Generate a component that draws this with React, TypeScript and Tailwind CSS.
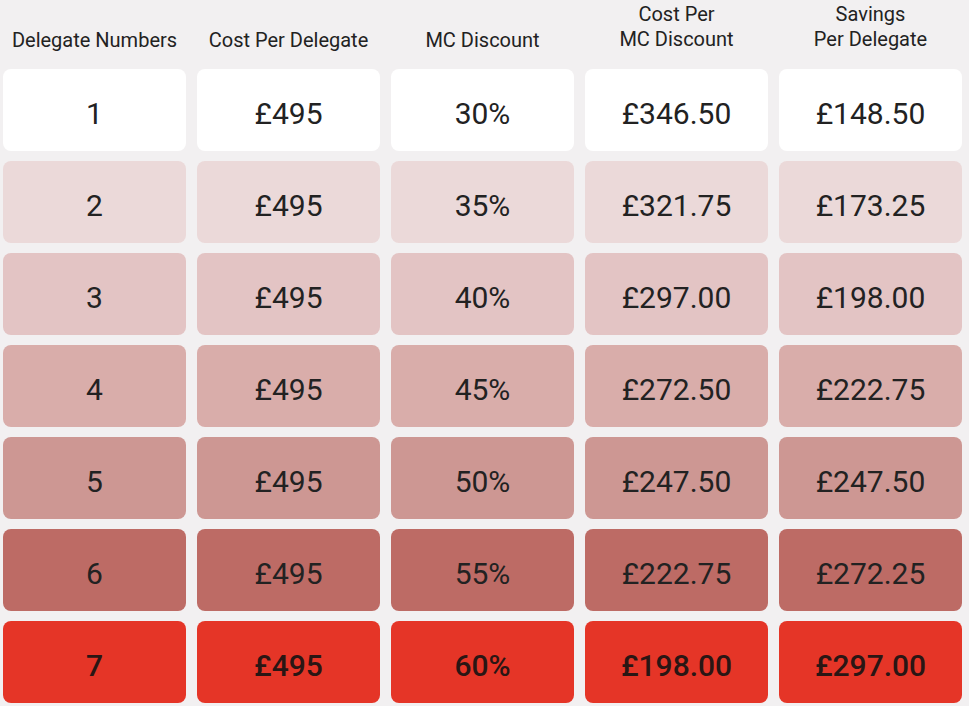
import React from 'react';

type Row = { n: string; cost: string; disc: string; per: string; save: string; bg: string; bold?: boolean };

const rows: Row[] = [
  { n: '1', cost: '£495', disc: '30%', per: '£346.50', save: '£148.50', bg: 'bg-white' },
  { n: '2', cost: '£495', disc: '35%', per: '£321.75', save: '£173.25', bg: 'bg-[#ebd9d9]' },
  { n: '3', cost: '£495', disc: '40%', per: '£297.00', save: '£198.00', bg: 'bg-[#e3c4c4]' },
  { n: '4', cost: '£495', disc: '45%', per: '£272.50', save: '£222.75', bg: 'bg-[#d9adaa]' },
  { n: '5', cost: '£495', disc: '50%', per: '£247.50', save: '£247.50', bg: 'bg-[#cd9793]' },
  { n: '6', cost: '£495', disc: '55%', per: '£222.75', save: '£272.25', bg: 'bg-[#bd6b65]' },
  { n: '7', cost: '£495', disc: '60%', per: '£198.00', save: '£297.00', bg: 'bg-[#e53527]', bold: true },
];

const headers: { lines: string[] }[] = [
  { lines: ['Delegate Numbers'] },
  { lines: ['Cost Per Delegate'] },
  { lines: ['MC Discount'] },
  { lines: ['Cost Per', 'MC Discount'] },
  { lines: ['Savings', 'Per Delegate'] },
];

export default function App() {
  return (
    <div
      className="w-[969px] h-[706px] overflow-hidden bg-[#f2f0f1] pl-[3px] text-[#222222]"
      style={{ fontFamily: 'Roboto, "Liberation Sans", sans-serif' }}
    >
      <div className="grid grid-cols-[repeat(5,183px)] gap-x-[11px] gap-y-[10px]">
        {headers.map((h, i) => (
          <div
            key={i}
            className={`h-[59px] flex flex-col items-center justify-end text-[20px] leading-[25px] ${h.lines.length > 1 ? 'pb-[7px]' : 'pb-[6px]'}`}
          >
            {h.lines.map((l) => (
              <span key={l}>{l}</span>
            ))}
          </div>
        ))}
        {rows.map((r) =>
          [r.n, r.cost, r.disc, r.per, r.save].map((v, j) => (
            <div
              key={r.n + '-' + j}
              className={`${r.bg} h-[82px] pt-[6px] rounded-lg flex items-center justify-center text-[30px] ${r.bold ? 'font-medium text-[#2a1614]' : ''}`}
            >
              {v}
            </div>
          ))
        )}
      </div>
    </div>
  );
}
